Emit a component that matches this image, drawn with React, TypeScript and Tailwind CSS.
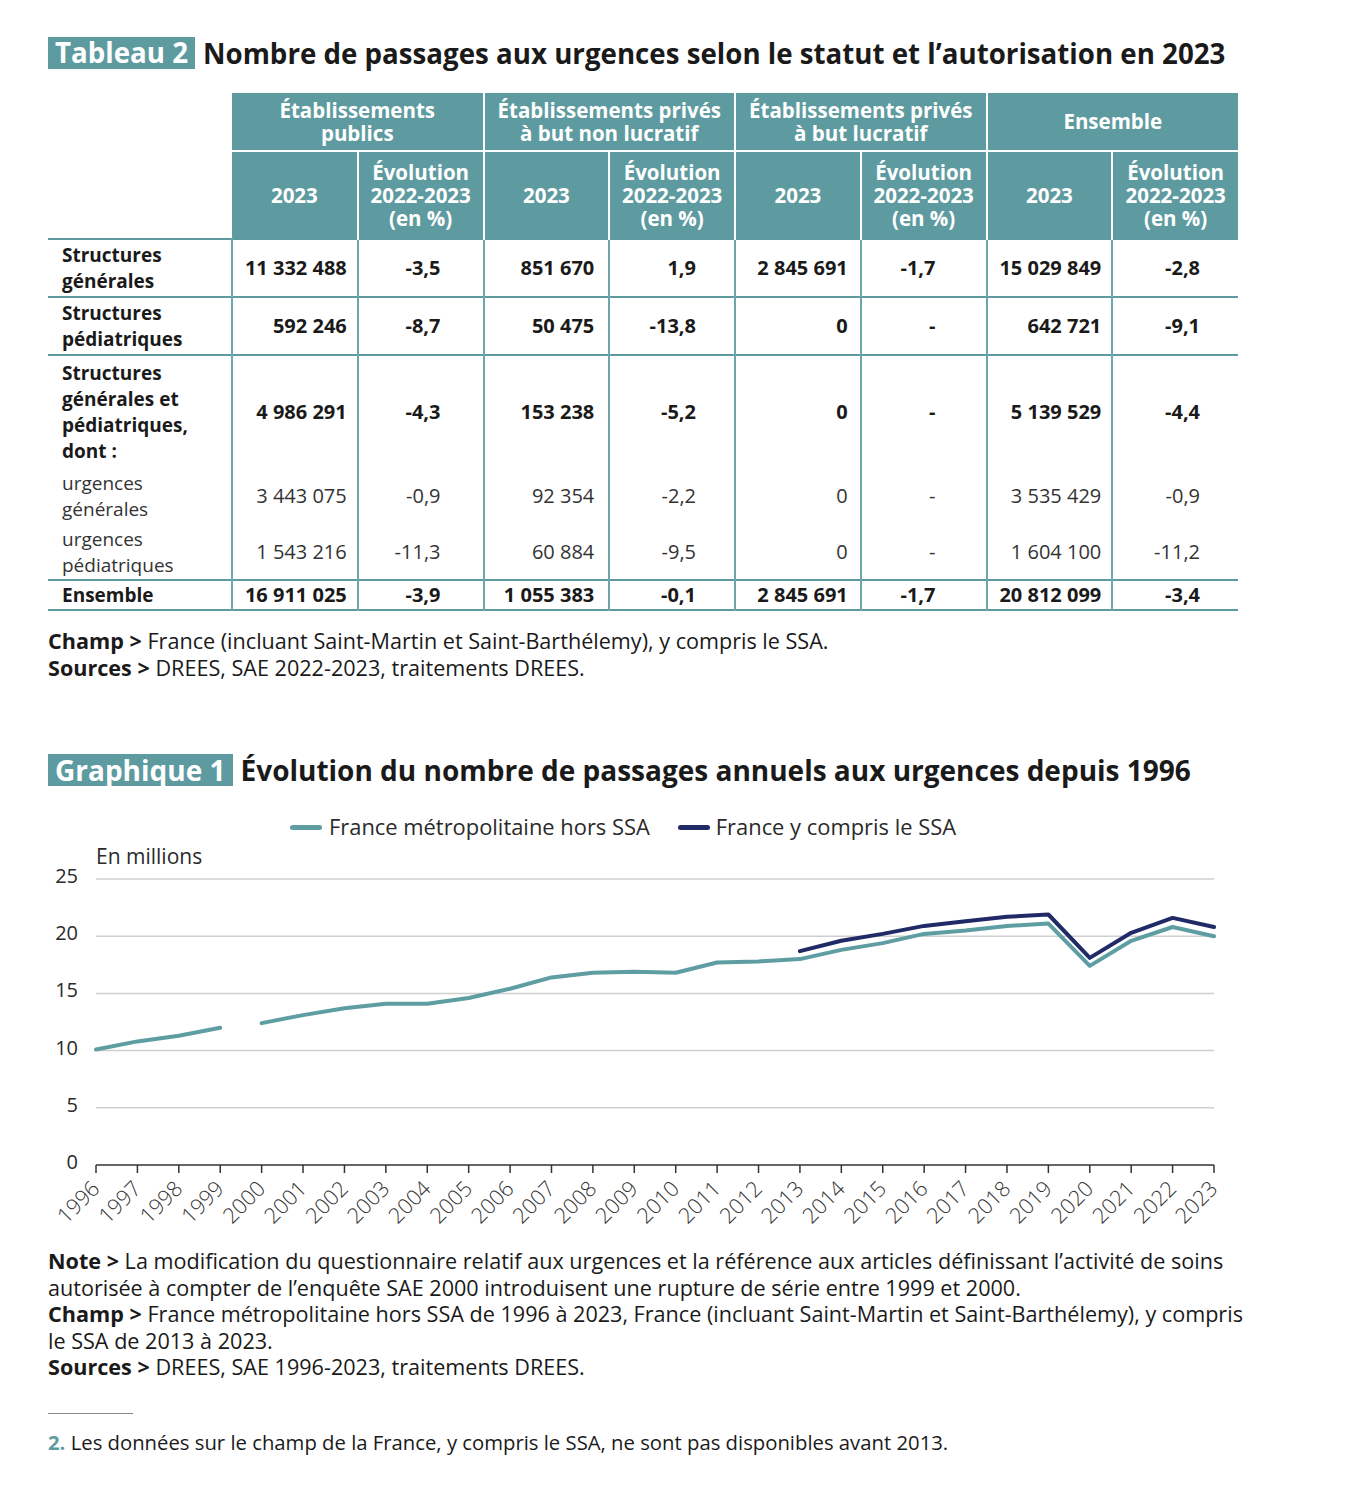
const FONT = '"Open Sans", "Liberation Sans", sans-serif';

type Row = {
  label: string[];
  vals: string[];
  bold: boolean;
  h: number;
  border: boolean;
};

const rows: Row[] = [
  {
    label: ['Structures', 'générales'],
    vals: ['11 332 488', '-3,5', '851 670', '1,9', '2 845 691', '-1,7', '15 029 849', '-2,8'],
    bold: true,
    h: 58,
    border: true,
  },
  {
    label: ['Structures', 'pédiatriques'],
    vals: ['592 246', '-8,7', '50 475', '-13,8', '0', '-', '642 721', '-9,1'],
    bold: true,
    h: 58,
    border: true,
  },
  {
    label: ['Structures', 'générales et', 'pédiatriques,', 'dont :'],
    vals: ['4 986 291', '-4,3', '153 238', '-5,2', '0', '-', '5 139 529', '-4,4'],
    bold: true,
    h: 112,
    border: false,
  },
  {
    label: ['urgences', 'générales'],
    vals: ['3 443 075', '-0,9', '92 354', '-2,2', '0', '-', '3 535 429', '-0,9'],
    bold: false,
    h: 57,
    border: false,
  },
  {
    label: ['urgences', 'pédiatriques'],
    vals: ['1 543 216', '-11,3', '60 884', '-9,5', '0', '-', '1 604 100', '-11,2'],
    bold: false,
    h: 56,
    border: true,
  },
  {
    label: ['Ensemble'],
    vals: ['16 911 025', '-3,9', '1 055 383', '-0,1', '2 845 691', '-1,7', '20 812 099', '-3,4'],
    bold: true,
    h: 30,
    border: true,
  },
];

const padRight = ['pr-[10px]', 'pr-[42px]', 'pr-[14px]', 'pr-[38px]', 'pr-[12px]', 'pr-[50px]', 'pr-[10px]', 'pr-[38px]'];

const groups = [
  ['Établissements', 'publics'],
  ['Établissements privés', 'à but non lucratif'],
  ['Établissements privés', 'à but lucratif'],
  ['Ensemble'],
];

const metro = [10.1, 10.8, 11.3, 12.0, 12.4, 13.1, 13.7, 14.1, 14.1, 14.6, 15.4, 16.4, 16.8, 16.9, 16.8, 17.7, 17.8, 18.0, 18.8, 19.4, 20.2, 20.5, 20.9, 21.1, 17.4, 19.6, 20.8, 20.0];
const ssa = [18.7, 19.6, 20.2, 20.9, 21.3, 21.7, 21.9, 18.1, 20.3, 21.6, 20.8];

const X0 = 56;
const STEP = (1174 - 56) / 27;
const Y0 = 326;
const UNIT = 11.44;
const xAt = (i: number) => X0 + i * STEP;
const yAt = (v: number) => Y0 - v * UNIT;

const pts = (vals: number[], start: number) =>
  vals.map((v, i) => `${xAt(start + i).toFixed(1)},${yAt(v).toFixed(1)}`).join(' ');

const Badge = ({ children }: { children: string }) => (
  <span className="bg-[#5e9ba0] text-white px-[7px] h-[32px] flex items-center leading-none">{children}</span>
);

const Chart = () => {
  const years = Array.from({ length: 28 }, (_, i) => 1996 + i);
  return (
    <svg width={1200} height={409} className="-ml-[8px] block" style={{ fontFamily: FONT }}>
      <text x={56} y={25} fontSize={21} fill="#2a2a2a">
        En millions
      </text>
      {[0, 5, 10, 15, 20, 25].map((v) => (
        <g key={v}>
          {v > 0 && <line x1={56} x2={1174} y1={yAt(v)} y2={yAt(v)} stroke="#cfcfcf" strokeWidth={1.5} />}
          <text x={38} y={yAt(v) + 4} fontSize={20} fill="#2a2a2a" textAnchor="end">
            {v}
          </text>
        </g>
      ))}
      <line x1={56} x2={1174} y1={Y0} y2={Y0} stroke="#333" strokeWidth={1.5} />
      {years.map((y, i) => (
        <g key={y}>
          <line x1={xAt(i)} x2={xAt(i)} y1={Y0} y2={Y0 + 8} stroke="#333" strokeWidth={1.5} />
          <text
            x={xAt(i) + 5}
            y={Y0 + 25}
            fontSize={21.5}
            fontWeight={300}
            fill="#333"
            textAnchor="end"
            transform={`rotate(-45 ${xAt(i) + 5} ${Y0 + 25})`}
          >
            {y}
          </text>
        </g>
      ))}
      <polyline points={pts(metro.slice(0, 4), 0)} fill="none" stroke="#5e9ea2" strokeWidth={4} strokeLinejoin="round" strokeLinecap="round" />
      <polyline points={pts(metro.slice(4), 4)} fill="none" stroke="#5e9ea2" strokeWidth={4} strokeLinejoin="round" strokeLinecap="round" />
      <polyline points={pts(ssa, 17)} fill="none" stroke="#1f2a66" strokeWidth={4} strokeLinejoin="round" strokeLinecap="round" />
    </svg>
  );
};

const App = () => {
  return (
    <div className="w-[1364px] min-h-[1504px] bg-white pl-[48px] pt-[37px] text-[#1a1a1a]" style={{ fontFamily: FONT }}>
      <h1 className="flex items-center gap-[8px] text-[27.7px] leading-[32px] font-bold">
        <Badge>Tableau 2</Badge>
        <span>Nombre de passages aux urgences selon le statut et l’autorisation en 2023</span>
      </h1>

      <table className="mt-[24px] table-fixed border-collapse w-[1190px]">
        <colgroup>
          <col className="w-[184px]" />
          {Array.from({ length: 8 }).map((_, i) => (
            <col key={i} className="w-[125.75px]" />
          ))}
        </colgroup>
        <thead className="text-white font-bold text-[20.5px] leading-[23px]">
          <tr className="h-[58px]">
            <th rowSpan={2} className="bg-white"></th>
            {groups.map((g, i) => (
              <th key={i} colSpan={2} className={`bg-[#5e9ba0] border-b-2 border-white ${i > 0 ? 'border-l-2' : ''}`}>
                {g.map((l) => (
                  <div key={l}>{l}</div>
                ))}
              </th>
            ))}
          </tr>
          <tr className="h-[88px]">
            {Array.from({ length: 8 }).map((_, i) => (
              <th key={i} className={`bg-[#5e9ba0] font-bold ${i > 0 ? 'border-l-2 border-white' : ''}`}>
                {i % 2 === 0 ? (
                  '2023'
                ) : (
                  <>
                    <div>Évolution</div>
                    <div>2022-2023</div>
                    <div>(en %)</div>
                  </>
                )}
              </th>
            ))}
          </tr>
        </thead>
        <tbody className="text-[20px] leading-[26px]">
          {rows.map((r, ri) => (
            <tr key={ri} style={{ height: r.h }} className={`${ri === 0 ? 'border-t-2 border-[#5e9ba0]' : ''} ${r.border ? 'border-b-2 border-[#5e9ba0]' : ''}`}>
              <td className={`pl-[14px] align-middle text-[19px] ${r.bold ? 'font-bold' : 'font-normal text-[#333]'}`}>
                {r.label.map((l) => (
                  <div key={l}>{l}</div>
                ))}
              </td>
              {r.vals.map((v, i) => (
                <td
                  key={i}
                  className={`border-l-2 border-[#6fa6ab] text-right whitespace-nowrap align-middle ${padRight[i]} ${
                    r.bold ? 'font-bold' : 'font-normal text-[#333]'
                  }`}
                >
                  {v}
                </td>
              ))}
            </tr>
          ))}
        </tbody>
      </table>

      <div className="mt-[16px] text-[21.6px] leading-[27px]">
        <p>
          <b>Champ &gt;</b> France (incluant Saint-Martin et Saint-Barthélemy), y compris le SSA.
        </p>
        <p>
          <b>Sources &gt;</b> DREES, SAE 2022-2023, traitements DREES.
        </p>
      </div>

      <h2 className="mt-[73px] flex items-center gap-[8px] text-[28px] leading-[32px] font-bold">
        <Badge>Graphique 1</Badge>
        <span>Évolution du nombre de passages annuels aux urgences depuis 1996</span>
      </h2>

      <div className="mt-[29px] flex items-center text-[21.9px] leading-[24px] pl-[242px] text-[#2a2a2a]">
        <span className="w-[32px] h-[5px] rounded-full bg-[#5e9ea2] mr-[7px]" />
        <span>France métropolitaine hors SSA</span>
        <span className="w-[32px] h-[5px] rounded-full bg-[#1f2a66] ml-[28px] mr-[6px]" />
        <span>France y compris le SSA</span>
      </div>

      <Chart />

      <div className="whitespace-nowrap text-[21.6px] leading-[26.5px] text-[#1a1a1a]">
        <p>
          <b>Note &gt;</b> La modification du questionnaire relatif aux urgences et la référence aux articles définissant l’activité de soins
          <br />
          autorisée à compter de l’enquête SAE 2000 introduisent une rupture de série entre 1999 et 2000.
        </p>
        <p>
          <b>Champ &gt;</b> France métropolitaine hors SSA de 1996 à 2023, France (incluant Saint-Martin et Saint-Barthélemy), y compris
          <br />
          le SSA de 2013 à 2023.
        </p>
        <p>
          <b>Sources &gt;</b> DREES, SAE 1996-2023, traitements DREES.
        </p>
      </div>

      <div className="mt-[32px] w-[85px] h-[1.5px] bg-[#888]" />
      <p className="mt-[15px] text-[20.3px] leading-[26px]">
        <b className="text-[#5e9ba0]">2.</b> Les données sur le champ de la France, y compris le SSA, ne sont pas disponibles avant 2013.
      </p>
    </div>
  );
};

export default App;
